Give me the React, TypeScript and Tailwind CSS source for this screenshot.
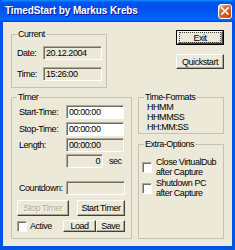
import { ReactNode } from 'react';

type EditProps = {
  value: string;
  disabled?: boolean;
  right?: boolean;
  className?: string;
};

const Edit = ({ value, disabled, right, className = '' }: EditProps) => (
  <div
    className={`flex h-[14px] items-center border border-[#aca899] border-r-white border-b-white px-[2px] shadow-[inset_1px_1px_0_#716f64] ${
      disabled ? 'bg-[#ece9d8]' : 'bg-white'
    } ${right ? 'justify-end' : ''} ${className}`}
  >
    {value}
  </div>
);

type BtnProps = {
  children: ReactNode;
  disabled?: boolean;
  className?: string;
};

const Btn = ({ children, disabled, className = '' }: BtnProps) => (
  <div
    className={`flex items-center justify-center border border-t-white border-l-white border-r-[#404040] border-b-[#404040] bg-[#ece9d8] shadow-[inset_-1px_-1px_0_#aca899] ${
      disabled ? 'text-[#aca899] [text-shadow:1px_1px_0_#fff]' : ''
    } ${className}`}
  >
    {children}
  </div>
);

const Check = () => (
  <div className="h-[11px] w-[10px] shrink-0 border border-[#aca899] border-r-white border-b-white bg-white shadow-[inset_1px_1px_0_#716f64]" />
);

const TitleBar = () => (
  <div className="flex h-[22px] items-center rounded-t-[4px] bg-[linear-gradient(to_bottom,#0997ff_0%,#0053ee_10%,#0050ee_40%,#0066ff_88%,#005bff_94%,#003dd7_100%)] pr-[3px] pl-[5px]">
    <span className="text-[10px] font-bold tracking-[-0.1px] text-white [text-shadow:1px_1px_0_#0f1089]">
      TimedStart by Markus Krebs
    </span>
    <div className="ml-auto flex h-[15px] w-[14px] items-center justify-center rounded-[3px] border border-white bg-[radial-gradient(circle_at_90%_90%,#cc4600_0%,#dc6527_55%,#cd7546_70%,#ffccb2_90%,#fff_100%)]">
      <svg width="8" height="8" viewBox="0 0 8 8">
        <path d="M1 1L7 7M7 1L1 7" stroke="#fff" strokeWidth="1.6" strokeLinecap="square" />
      </svg>
    </div>
  </div>
);

export default function App() {
  return (
    <div className="flex h-[250px] w-[235px] flex-col bg-[#0054e3] font-['Liberation_Sans',Arial,sans-serif] text-[9px] leading-[10px] tracking-[-0.45px] text-black">
      <TitleBar />
      <div className="mx-[3px] mb-[4px] flex flex-1 flex-col bg-[#ece9d8]">
        <div className="flex items-start">
          <fieldset className="mt-[7px] ml-[8px] h-[59px] w-[96px] border border-[#c5c2b2] pl-[5px]">
            <legend className="px-[1px]">Current</legend>
            <div className="mt-[7px] flex items-center">
              <span className="w-[26px]">Date:</span>
              <Edit value="20.12.2004" disabled className="w-[59px]" />
            </div>
            <div className="mt-[7px] flex items-center">
              <span className="w-[26px]">Time:</span>
              <Edit value="15:26:00" disabled className="w-[59px]" />
            </div>
          </fieldset>
          <div className="mt-[8px] mr-[8px] ml-auto flex w-[48px] flex-col">
            <div className="h-[15px] border border-black">
              <Btn className="h-full">
                <div className="m-[1px] flex h-[11px] w-[42px] items-center justify-center border border-dotted border-[#404040]">
                  Exit
                </div>
              </Btn>
            </div>
            <Btn className="mt-[9px] h-[15px]">Quickstart</Btn>
          </div>
        </div>

        <div className="mt-[4px] flex items-start">
          <fieldset className="ml-[8px] h-[147px] w-[121px] border border-[#c5c2b2] pr-[6px] pl-[5px]">
            <legend className="px-[1px]">Timer</legend>
            <div className="mt-[3px] flex items-center">
              <span className="w-[49px] pl-[2px]">Start-Time:</span>
              <Edit value="00:00:00" className="w-[58px]" />
            </div>
            <div className="mt-[3px] flex items-center">
              <span className="w-[49px] pl-[2px]">Stop-Time:</span>
              <Edit value="00:00:00" className="w-[58px]" />
            </div>
            <div className="mt-[2px] flex items-center">
              <span className="w-[49px] pl-[2px]">Length:</span>
              <Edit value="00:00:00" disabled className="w-[58px]" />
            </div>
            <div className="mt-[2px] flex items-center">
              <span className="w-[49px]" />
              <Edit value="0" disabled right className="w-[37px]" />
              <span className="ml-[6px]">sec</span>
            </div>
            <div className="mt-[13px] flex items-center">
              <span className="w-[49px] pl-[2px]">Countdown:</span>
              <Edit value="" disabled className="w-[59px]" />
            </div>
            <div className="mt-[5px] flex items-center">
              <Btn disabled className="h-[16px] w-[52px]">
                Stop Timer
              </Btn>
              <Btn className="ml-[8px] h-[16px] w-[48px]">Start Timer</Btn>
            </div>
            <div className="mt-[4px] flex items-center">
              <Check />
              <span className="ml-[3px]">Active</span>
              <Btn className="ml-auto h-[12px] w-[33px]">Load</Btn>
              <Btn className="h-[12px] w-[29px]">Save</Btn>
            </div>
          </fieldset>

          <div className="ml-[6px] flex w-[86px] flex-col">
            <fieldset className="h-[42px] border border-[#c5c2b2] pl-[5px]">
              <legend className="px-[1px]">Time-Formats</legend>
              <div className="ml-[3px] flex flex-col">
                <span>HHMM</span>
                <span>HHMMSS</span>
                <span>HH:MM:SS</span>
              </div>
            </fieldset>
            <fieldset className="mt-[5px] h-[100px] border border-[#c5c2b2] pl-[5px]">
              <legend className="px-[1px]">Extra-Options</legend>
              <div className="mt-[8px] -ml-[2px] flex flex-col">
                <div className="flex items-center gap-[4px]">
                  <Check />
                  <span className="whitespace-nowrap">
                    Close VirtualDub
                    <br />
                    after Capture
                  </span>
                </div>
                <div className="mt-[1px] flex items-center gap-[4px]">
                  <Check />
                  <span className="whitespace-nowrap">
                    Shutdown PC
                    <br />
                    after Capture
                  </span>
                </div>
              </div>
            </fieldset>
          </div>
        </div>
      </div>
    </div>
  );
}
